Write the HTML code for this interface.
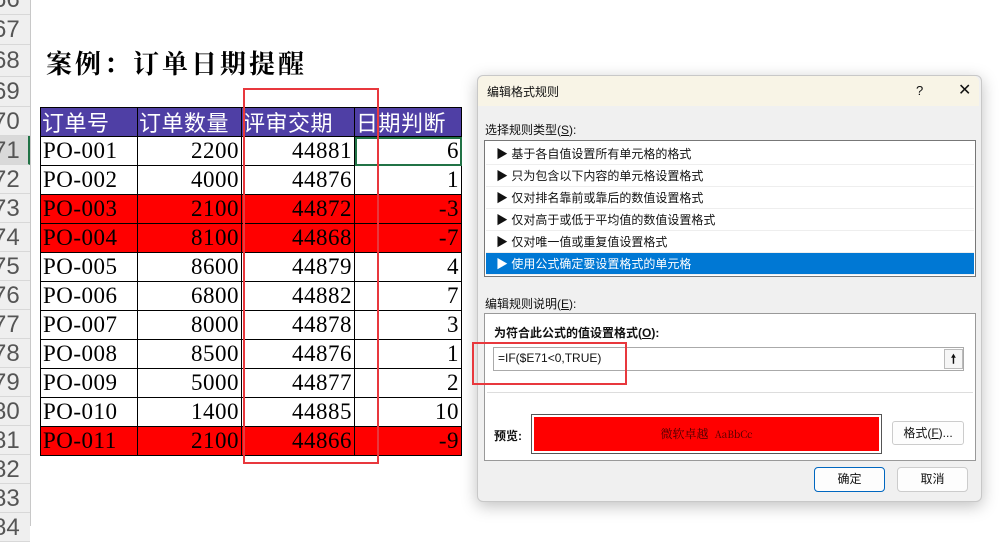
<!DOCTYPE html><html><head><meta charset="utf-8"><style>
body{margin:0;width:1005px;height:526px;overflow:hidden;background:#fff;position:relative;font-family:"Liberation Sans","Noto Sans CJK SC",sans-serif}
.abs{position:absolute}
.rh{position:absolute;left:0;width:30px;background:#efefef;border-bottom:1px solid #d8d8d8;color:#555;font-size:24px;box-sizing:border-box;overflow:hidden;line-height:29px;font-family:"Liberation Sans",sans-serif}
.rh span{position:absolute;left:-7px;top:0}
table{position:absolute;left:40px;top:107px;border-collapse:collapse;font-family:"Liberation Serif","Noto Serif CJK SC",serif;font-size:23px}
td{border:1px solid #000;height:28px;padding:0 2px;line-height:28px;letter-spacing:0.5px}
tr.h td{background:#4f3fa5;color:#fff;font-family:"Noto Sans CJK SC",sans-serif;font-size:22px;padding:0 1px}
tr.r td{background:#f00}
td.n{text-align:right}
.d{position:absolute;left:477px;top:75px;width:503px;height:425px;background:#f0f0f0;border:1px solid #c8c8c8;border-radius:6px;box-shadow:0 4px 16px rgba(0,0,0,.25);font-size:12px;color:#111}
.d *{box-sizing:border-box}
.it{position:absolute;left:1px;right:1px;height:22px;line-height:22px;padding-left:10px;border-bottom:1px solid #eee}
</style></head><body>
<div class="rh" style="top:-15px;height:30px;line-height:30px"><span>66</span></div>
<div class="rh" style="top:15px;height:30px;line-height:30px"><span>67</span></div>
<div class="rh" style="top:45px;height:32px;line-height:32px"><span>68</span></div>
<div class="rh" style="top:77px;height:30px;line-height:30px"><span>69</span></div>
<div class="rh" style="top:107px;height:29px"><span>70</span></div>
<div class="rh" style="top:136px;height:29px;background:#d9d9d9;border-right:2px solid #217346"><span>71</span></div>
<div class="rh" style="top:165px;height:29px"><span>72</span></div>
<div class="rh" style="top:194px;height:29px"><span>73</span></div>
<div class="rh" style="top:223px;height:29px"><span>74</span></div>
<div class="rh" style="top:252px;height:29px"><span>75</span></div>
<div class="rh" style="top:281px;height:29px"><span>76</span></div>
<div class="rh" style="top:310px;height:29px"><span>77</span></div>
<div class="rh" style="top:339px;height:29px"><span>78</span></div>
<div class="rh" style="top:368px;height:29px"><span>79</span></div>
<div class="rh" style="top:397px;height:29px"><span>80</span></div>
<div class="rh" style="top:426px;height:29px"><span>81</span></div>
<div class="rh" style="top:455px;height:29px"><span>82</span></div>
<div class="rh" style="top:484px;height:29px"><span>83</span></div>
<div class="rh" style="top:513px;height:29px"><span>84</span></div>
<div class="abs" style="left:30px;top:0;width:1px;height:526px;background:#c8c8c8"></div>
<div class="abs" style="left:46px;top:44px;font-size:26px;font-weight:bold;letter-spacing:3px;font-family:'Noto Serif CJK SC',serif">案例：订单日期提醒</div>
<table>
<tr class="h"><td style="width:94px">订单号</td><td style="width:101px">订单数量</td><td style="width:110px">评审交期</td><td style="width:104px">日期判断</td></tr>
<tr><td>PO-001</td><td class="n">2200</td><td class="n">44881</td><td class="n" style="outline:2px solid #217346;outline-offset:-2px">6</td></tr>
<tr><td>PO-002</td><td class="n">4000</td><td class="n">44876</td><td class="n">1</td></tr>
<tr class="r"><td>PO-003</td><td class="n">2100</td><td class="n">44872</td><td class="n">-3</td></tr>
<tr class="r"><td>PO-004</td><td class="n">8100</td><td class="n">44868</td><td class="n">-7</td></tr>
<tr><td>PO-005</td><td class="n">8600</td><td class="n">44879</td><td class="n">4</td></tr>
<tr><td>PO-006</td><td class="n">6800</td><td class="n">44882</td><td class="n">7</td></tr>
<tr><td>PO-007</td><td class="n">8000</td><td class="n">44878</td><td class="n">3</td></tr>
<tr><td>PO-008</td><td class="n">8500</td><td class="n">44876</td><td class="n">1</td></tr>
<tr><td>PO-009</td><td class="n">5000</td><td class="n">44877</td><td class="n">2</td></tr>
<tr><td>PO-010</td><td class="n">1400</td><td class="n">44885</td><td class="n">10</td></tr>
<tr class="r"><td>PO-011</td><td class="n">2100</td><td class="n">44866</td><td class="n">-9</td></tr>
</table>
<div class="abs" style="left:243px;top:88px;width:136px;height:376px;border:2px solid #e8383d;box-sizing:border-box"></div>
<div class="d">
<div class="abs" style="left:0;top:0;width:501px;height:30px;background:#f8f4e6;border-radius:6px 6px 0 0"></div>
<div class="abs" style="left:9px;top:7px">编辑格式规则</div>
<div class="abs" style="left:438px;top:7px;font-size:13px">?</div>
<div class="abs" style="left:480px;top:4px;font-size:16px;font-weight:300">✕</div>
<div class="abs" style="left:7px;top:45px">选择规则类型(<u>S</u>):</div>
<div class="abs" style="left:6px;top:64px;width:492px;height:137px;background:#fff;border:1px solid #777">
<div class="it" style="top:2px">▶ 基于各自值设置所有单元格的格式</div>
<div class="it" style="top:24px">▶ 只为包含以下内容的单元格设置格式</div>
<div class="it" style="top:46px">▶ 仅对排名靠前或靠后的数值设置格式</div>
<div class="it" style="top:68px">▶ 仅对高于或低于平均值的数值设置格式</div>
<div class="it" style="top:90px">▶ 仅对唯一值或重复值设置格式</div>
<div class="it" style="top:112px;background:#0078d4;color:#fff">▶ 使用公式确定要设置格式的单元格</div>
</div>
<div class="abs" style="left:7px;top:219px">编辑规则说明(<u>E</u>):</div>
<div class="abs" style="left:6px;top:237px;width:492px;height:148px;background:#fff;border:1px solid #999">
<div class="abs" style="left:9px;top:10px;font-weight:bold">为符合此公式的值设置格式(<u>O</u>):</div>
<div class="abs" style="left:8px;top:33px;width:471px;height:24px;border:1px solid #aaa;padding:3px 4px">=IF($E71&lt;0,TRUE)</div>
<div class="abs" style="left:459px;top:35px;width:19px;height:20px;border:1px solid #bbb;background:#f6f6f6;text-align:center;font-weight:bold;line-height:18px">🠕</div>
<div class="abs" style="left:2px;top:78px;width:486px;height:1px;background:#ddd"></div>
<div class="abs" style="left:9px;top:113px;font-weight:bold">预览:</div>
<div class="abs" style="left:46px;top:100px;width:351px;height:40px;border:1px solid #555;padding:2px"><div style="background:#f00;height:100%;text-align:center;line-height:34px;font-family:'Noto Serif CJK SC',serif;color:#400">微软卓越 &nbsp;<span style="font-size:10px">AaBbCc</span></div></div>
<div class="abs" style="left:407px;top:107px;width:72px;height:24px;border:1px solid #ccc;border-radius:3px;background:#fdfdfd;text-align:center;line-height:22px">格式(<u>F</u>)...</div>
</div>
<div class="abs" style="left:336px;top:391px;width:71px;height:25px;border:1px solid #0067c0;border-radius:4px;background:#fdfdfd;text-align:center;line-height:23px">确定</div>
<div class="abs" style="left:419px;top:391px;width:71px;height:25px;border:1px solid #ccc;border-radius:4px;background:#fdfdfd;text-align:center;line-height:23px">取消</div>
</div>
<div class="abs" style="left:472px;top:342px;width:155px;height:43px;border:2px solid #e8383d;box-sizing:border-box"></div>
</body></html>
